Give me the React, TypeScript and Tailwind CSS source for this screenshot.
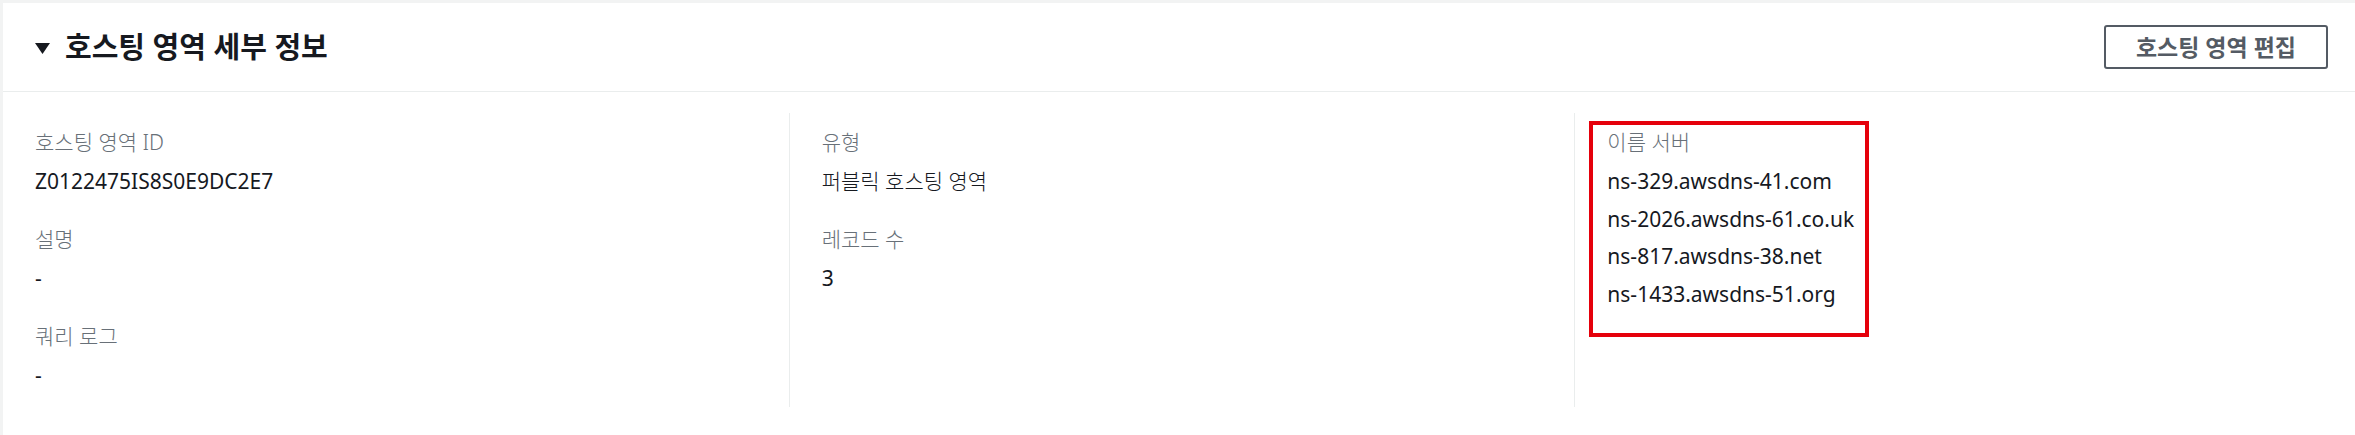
const font = { fontFamily: '"Noto Sans", "Noto Sans CJK KR", sans-serif' };

function Field({ label, values, light }: { label: string; values: string[]; light?: boolean }) {
  return (
    <div>
      <div className="text-[21px] leading-[33px] font-light text-[#687078]">{label}</div>
      <div className="mt-[6px] flex flex-col gap-[4.5px]">
        {values.map((v) => (
          <div
            key={v}
            className={light ? "text-[21px] leading-[33px] font-light text-[#16191f]" : "text-[21px] leading-[33px] text-[#16191f]"}
          >
            {v}
          </div>
        ))}
      </div>
    </div>
  );
}

export default function App() {
  const nameServers = [
    "ns-329.awsdns-41.com",
    "ns-2026.awsdns-61.co.uk",
    "ns-817.awsdns-38.net",
    "ns-1433.awsdns-51.org",
  ];

  return (
    <div className="w-[2355px] h-[435px] overflow-hidden bg-[#f2f3f3]" style={font}>
      <div className="ml-[3px] mt-[3px] w-[2357px] h-[440px] bg-white">
        {/* header */}
        <div className="flex items-center justify-between px-[32px] py-[22px] border-b border-[#eaeded]">
          <h2 className="flex items-center gap-[15px] text-[29px] leading-[44px] font-bold text-[#16191f]">
            <svg width="15" height="11" viewBox="0 0 15 11" className="mt-[2px]">
              <polygon points="0,0 15,0 7.5,11" fill="#16191f" />
            </svg>
            호스팅 영역 세부 정보
          </h2>
          <button className="h-[44px] px-[30px] border-2 border-[#545b64] rounded-[3px] text-[23px] font-bold text-[#545b64] leading-none">
            호스팅 영역 편집
          </button>
        </div>

        {/* body */}
        <div className="grid grid-cols-3 pt-[21px]">
          <div className="pl-[32px] pt-[13px] pb-[13px] h-[294px] flex flex-col gap-[25px]">
            <Field label="호스팅 영역 ID" values={["Z0122475IS8S0E9DC2E7"]} />
            <Field label="설명" values={["-"]} />
            <Field label="쿼리 로그" values={["-"]} />
          </div>
          <div className="pl-[32px] pt-[13px] pb-[13px] h-[294px] border-l border-[#eaeded] flex flex-col gap-[25px]">
            <Field label="유형" values={["퍼블릭 호스팅 영역"]} light />
            <Field label="레코드 수" values={["3"]} />
          </div>
          <div className="pl-[32px] pt-[13px] pb-[13px] h-[294px] border-l border-[#eaeded]">
            <div className="relative">
              <Field label="이름 서버" values={nameServers} />
              <div className="absolute -left-[18px] -top-[5px] w-[280px] h-[216px] border-4 border-[#e5000b]" />
            </div>
          </div>
        </div>
      </div>
    </div>
  );
}
